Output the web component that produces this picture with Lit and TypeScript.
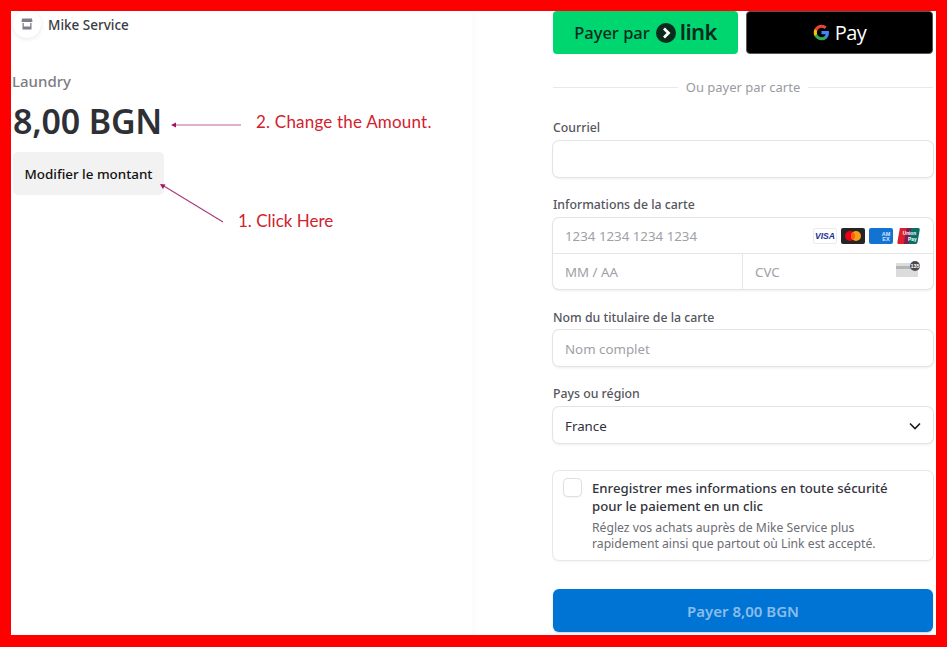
import { LitElement, html, css, svg } from "lit";
import { customElement } from "lit/decorators.js";

@customElement("app-root")
export class AppRoot extends LitElement {
  static styles = css`
    :host {
      display: block;
      position: relative;
      width: 947px;
      height: 647px;
      box-sizing: border-box;
      padding: 11px 11px 12px;
      background: #ff0000;
      font-family: "Noto Sans", "Open Sans", sans-serif;
      color: #30313d;
      overflow: hidden;
    }
    .page { display: flex; height: 100%; background: #fff; overflow: hidden; }
    .left {
      width: 461px;
      flex: none;
      box-sizing: border-box;
      padding-left: 2px;
      box-shadow: 3px 0 8px rgba(0,0,0,0.025);
    }
    .merchant { display: flex; align-items: center; gap: 7px; height: 28px; }
    .logo {
      width: 28px; height: 28px; border-radius: 50%; background: #fff;
      box-shadow: 0 1px 5px rgba(0,0,0,0.1);
      display: flex; align-items: center; justify-content: center; flex: none;
      margin-top: -2px;
    }
    .mname { font-size: 13.5px; font-weight: 500; color: #3a3b44; line-height: 28px; }
    .product { font-size: 15px; font-weight: 500; color: #7b7c83; line-height: 20px; margin-top: 32px; margin-left: -1px; }
    .amount { font-size: 34px; font-weight: 600; color: #2f3035; line-height: 44px; margin-top: 8px; letter-spacing: -0.2px; }
    .modify {
      display: flex; align-items: center; justify-content: center;
      width: 151px; height: 43px; margin-top: 9px;
      background: #f2f2f2; border-radius: 5px;
      font-size: 13.4px; font-weight: 500; color: #111;
    }
    .right { flex: 1; box-sizing: border-box; padding: 0 3px 0 81px; }
    .express { display: flex; gap: 8px; }
    .btn {
      flex: 1; height: 43px; border-radius: 4px;
      display: flex; align-items: center; justify-content: center;
      box-sizing: border-box;
    }
    .link { background: #00d66f; color: #0b2b1d; font-size: 16.5px; font-weight: 500; }
    .linkmark { margin: 0 4px 0 6px; }
    .linkword { font-size: 22px; font-weight: 600; letter-spacing: -0.6px; color: #0b2b1d; line-height: 30px; margin-top: -3px; }
    .gpay { background: #000; border: 1px solid #55565c; gap: 5px; color: #fff; font-size: 20px; letter-spacing: -0.5px; font-family: "Open Sans", sans-serif; }
    .or { display: flex; align-items: center; gap: 8px; height: 20px; margin-top: 23px; font-size: 13px; color: #9a9aa0; }
    .or i { flex: 1; height: 1px; background: #e8e8e8; }
    .label { font-size: 12.3px; font-weight: 500; color: #55565e; line-height: 18px; }
    .f1 { margin-top: 22px; }
    .f2 { margin-top: 19px; }
    .f3 { margin-top: 20px; }
    .f4 { margin-top: 19px; }
    .control {
      margin-top: 4px;
      height: 36px; box-sizing: border-box;
      border-radius: 6px; background: #fff;
      box-shadow: 0 0 0 1px #e3e3e6, 0 2px 3px rgba(0,0,0,0.07);
      display: flex; align-items: center; padding: 1px 12px 0;
      font-size: 13.3px; color: #a0a0a6;
    }
    .f3 .control { margin-top: 3px; }
    .value { color: #30313d; flex: 1; }
    .card { margin-top: 4px; height: 71px; border-radius: 6px; box-shadow: 0 0 0 1px #e3e3e6, 0 2px 3px rgba(0,0,0,0.07); display: flex; flex-direction: column; font-size: 13.3px; color: #a0a0a6; }
    .cardrow { flex: none; height: 36px; box-sizing: border-box; display: flex; align-items: center; justify-content: space-between; padding: 0 13px 0 12px; border-bottom: 1px solid #e6e6e9; }
    .brands { display: flex; gap: 4px; }
    .cardbottom { flex: 1; display: flex; }
    .exp { width: 190px; box-sizing: border-box; flex: none; border-right: 1px solid #e6e6e9; padding-left: 12px; display: flex; align-items: center; }
    .cvc { flex: 1; display: flex; align-items: center; justify-content: space-between; padding: 0 13px 0 12px; }
    .cvc svg { margin-top: -6px; }
    .save {
      margin-top: 28px; height: 89px; box-sizing: border-box;
      border-radius: 6px; box-shadow: 0 0 0 1px #e8e8eb, 0 2px 3px rgba(0,0,0,0.05);
      padding: 8px 12px 0 11px; display: flex; gap: 11px;
    }
    .check { width: 17px; height: 17px; border-radius: 4px; flex: none; box-shadow: 0 0 0 1px #e0e0e3, 0 1px 3px rgba(0,0,0,0.1); margin-top: 0; }
    .savetitle { font-size: 13.2px; font-weight: 500; line-height: 18px; color: #33343c; }
    .savesub { font-size: 12.2px; line-height: 16px; color: #6c6d75; margin-top: 5px; }
    .pay {
      margin-top: 29px; height: 43px; border-radius: 6px; background: #0074d4;
      display: flex; align-items: center; justify-content: center;
      font-size: 15px; font-weight: 600; color: #8bbde9;
      box-shadow: 0 1px 2px rgba(0,0,0,0.2);
    }
    .arrows { position: absolute; left: 0; top: 0; pointer-events: none; }
    .note { position: absolute; font-family: Lato, "Liberation Sans", sans-serif; font-size: 17px; line-height: 22px; color: #d3212d; white-space: nowrap; }
    .n2 { left: 256px; top: 111px; letter-spacing: 0.2px; }
    .n1 { left: 238px; top: 210px; }
  `;

  private brands() {
    return html`
      <svg width="24" height="16" viewBox="0 0 24 16" aria-label="Visa">
        <rect x=".5" y=".5" width="23" height="15" rx="1.5" fill="#fff" stroke="#e8eaf0"/>
        <text x="12" y="11.3" text-anchor="middle" font-family="Liberation Sans" font-weight="700" font-style="italic" font-size="8.6" fill="#1a2f8f">VISA</text>
      </svg>
      <svg width="24" height="16" viewBox="0 0 24 16" aria-label="Mastercard">
        <rect width="24" height="16" rx="2" fill="#252525"/>
        <circle cx="9" cy="8" r="5" fill="#eb001b"/>
        <circle cx="15" cy="8" r="5" fill="#f79e1b"/>
        <path d="M12 4a5 5 0 0 1 0 8 5 5 0 0 1 0-8z" fill="#ff5f00"/>
      </svg>
      <svg width="24" height="16" viewBox="0 0 24 16" aria-label="American Express">
        <rect width="24" height="16" rx="2" fill="#1273d3"/>
        <text x="17" y="7.500" text-anchor="middle" font-family="Liberation Sans" font-weight="700" font-size="5.500" fill="#d4e6f8">AM</text>
        <text x="17" y="13" text-anchor="middle" font-family="Liberation Sans" font-weight="700" font-size="5.500" fill="#d4e6f8">EX</text>
      </svg>
      <svg width="23" height="16" viewBox="0 0 24 16" preserveAspectRatio="none" aria-label="UnionPay">
        <path d="M3 0h8L8.500 16H1.500Q0 16 .4 14z" fill="#dd1f2e"/>
        <path d="M10 0h6l-3 16H7z" fill="#7a1f4e"/>
        <path d="M15 0h7.500Q24 0 23.700 2L21.500 14Q21.200 16 19.500 16H12z" fill="#0b6f68"/>
        <text x="13" y="7" text-anchor="middle" font-family="Liberation Sans" font-weight="700" font-size="5" fill="#fff">Union</text>
        <text x="16" y="13" text-anchor="middle" font-family="Liberation Sans" font-weight="700" font-size="5" fill="#fff">Pay</text>
      </svg>`;
  }

  render() {
    return html`
      <div class="page">
        <section class="left">
          <div class="merchant">
            <div class="logo">
              <svg width="12" height="12" viewBox="0 0 12 12">
                <path d="M1 0.500h10l.5 3.500h-11z" fill="#7d7e86"/>
                <path d="M1.500 5v6.500h9V5h-1.300v3.500H2.800V5z" fill="#7d7e86"/>
              </svg>
            </div>
            <div class="mname">Mike Service</div>
          </div>
          <div class="product">Laundry</div>
          <div class="amount">8,00 BGN</div>
          <div class="modify">Modifier le montant</div>
        </section>

        <section class="right">
          <div class="express">
            <div class="btn link">
              <span>Payer par</span>
              <svg class="linkmark" width="20" height="20" viewBox="0 0 20 20">
                <circle cx="10" cy="10" r="10" fill="#0b2b1d"/>
                <path d="M8 5.500l4.500 4.500L8 14.500" fill="none" stroke="#fff" stroke-width="2.800"/>
              </svg>
              <span class="linkword">link</span>
            </div>
            <div class="btn gpay">
              <svg width="17" height="17" viewBox="0 0 48 48">
                <path fill="#4285f4" d="M45 24.500c0-1.600-.1-3.100-.4-4.500H24v8.600h11.800c-.5 2.700-2.100 5-4.400 6.600v5.500h7.100C42.600 36.900 45 31.200 45 24.500z"/>
                <path fill="#34a853" d="M24 46c5.900 0 10.900-2 14.500-5.300l-7.100-5.500c-2 1.300-4.500 2.100-7.400 2.100-5.700 0-10.500-3.800-12.300-9H4.400v5.700C8 41.100 15.400 46 24 46z"/>
                <path fill="#fbbc04" d="M11.700 28.300c-.9-2.700-.9-5.700 0-8.500V14H4.400C1.400 20 1.400 28 4.400 34z"/>
                <path fill="#ea4335" d="M24 10.700c3.200 0 6.100 1.100 8.300 3.300l6.300-6.300C34.900 4.100 29.900 2 24 2 15.400 2 8 6.900 4.400 14l7.300 5.700c1.800-5.200 6.600-9 12.300-9z"/>
              </svg>
              <span>Pay</span>
            </div>
          </div>

          <div class="or"><i></i><span>Ou payer par carte</span><i></i></div>

          <div class="f1">
            <div class="label">Courriel</div>
            <div class="control"></div>
          </div>

          <div class="f2">
            <div class="label">Informations de la carte</div>
            <div class="card">
              <div class="cardrow">
                <span>1234 1234 1234 1234</span>
                <span class="brands">${this.brands()}</span>
              </div>
              <div class="cardbottom">
                <div class="exp">MM / AA</div>
                <div class="cvc">
                  <span>CVC</span>
                  <svg width="24" height="16" viewBox="0 0 24 16" aria-label="CVC">
                    <rect y="2" width="22" height="14" rx="1" fill="#dcdcdc"/>
                    <rect y="5" width="22" height="3" fill="#b5b5b5"/>
                    <circle cx="19" cy="5" r="5" fill="#4a4a4f"/>
                    <text x="19" y="7" text-anchor="middle" font-size="5.500" font-family="Liberation Sans" font-weight="700" fill="#fff">135</text>
                  </svg>
                </div>
              </div>
            </div>
          </div>

          <div class="f3">
            <div class="label">Nom du titulaire de la carte</div>
            <div class="control">Nom complet</div>
          </div>

          <div class="f4">
            <div class="label">Pays ou région</div>
            <div class="control">
              <span class="value">France</span>
              <svg width="12" height="8" viewBox="0 0 12 8">
                <path d="M1 1.500l5 5 5-5" fill="none" stroke="#1a1a1a" stroke-width="1.600"/>
              </svg>
            </div>
          </div>

          <div class="save">
            <div class="check"></div>
            <div>
              <div class="savetitle">Enregistrer mes informations en toute sécurité<br />pour le paiement en un clic</div>
              <div class="savesub">Réglez vos achats auprès de Mike Service plus<br />rapidement ainsi que partout où Link est accepté.</div>
            </div>
          </div>

          <div class="pay">Payer 8,00 BGN</div>
        </section>
      </div>

      <svg class="arrows" width="947" height="647" viewBox="0 0 947 647">
        ${svg`
          <path d="M241 125H174" stroke="#c9609a" stroke-width="1.200" fill="none"/>
          <path d="M171 125l5-2.500v5z" fill="#a01560"/>
          <path d="M223 222L163 185.500" stroke="#a83a78" stroke-width="1.100" fill="none"/>
          <path d="M160 184l5.500.6-2.600 4.300z" fill="#a01560"/>
        `}
      </svg>
      <div class="note n2">2. Change the Amount.</div>
      <div class="note n1">1. Click Here</div>
    `;
  }
}
